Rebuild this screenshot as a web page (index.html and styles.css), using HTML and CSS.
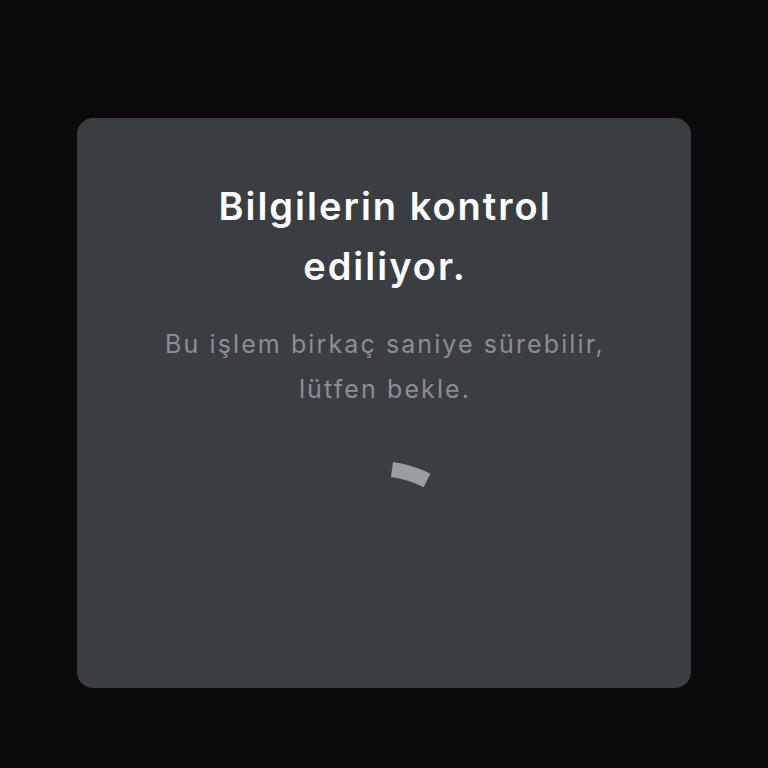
FILE: index.html
```html
<!DOCTYPE html>
<html lang="tr">
<head>
    <meta charset="UTF-8">
    <meta name="viewport" content="width=device-width, initial-scale=1.0">
    <title>Bilgilerin kontrol ediliyor</title>
    <link rel="stylesheet" href="styles.css">
</head>
<body>
    <div class="card">
        <h1 class="title">Bilgilerin kontrol ediliyor.</h1>
        <p class="subtitle">Bu işlem birkaç saniye sürebilir, lütfen bekle.</p>
        <div class="spinner">
            <svg width="120" height="44" viewBox="0 0 120 44">
                <path d="M68 14.5 A110 110 0 0 1 103 25.5" fill="none" stroke="#9a9da0" stroke-width="15"/>
            </svg>
        </div>
    </div>
</body>
</html>
```

FILE: styles.css
```css
html, body {
    margin: 0;
    padding: 0;
}

body {
    background: #0b0b0c;
    font-family: Inter, 'Noto Sans', sans-serif;
    width: 768px;
    height: 768px;
    padding-top: 118px;
    box-sizing: border-box;
}

.card {
    width: 614px;
    height: 570px;
    margin: 0 auto;
    background: #3a3e42;
    border-radius: 16px;
    box-sizing: border-box;
    padding: 58px 50px 0;
    text-align: center;
}

.title {
    max-width: 420px;
    margin: 0 auto;
    padding-left: 2px;
    color: #ffffff;
    font-size: 38px;
    font-weight: 600;
    line-height: 60px;
    letter-spacing: 2px;
}

.subtitle {
    margin: 26px 0 0;
    padding-left: 2px;
    color: #8b8e91;
    font-size: 25px;
    font-weight: 400;
    line-height: 45px;
    letter-spacing: 2.1px;
}

.spinner {
    margin-top: 43px;
    display: flex;
    justify-content: center;
}

.spinner svg {
    display: block;
}
```
